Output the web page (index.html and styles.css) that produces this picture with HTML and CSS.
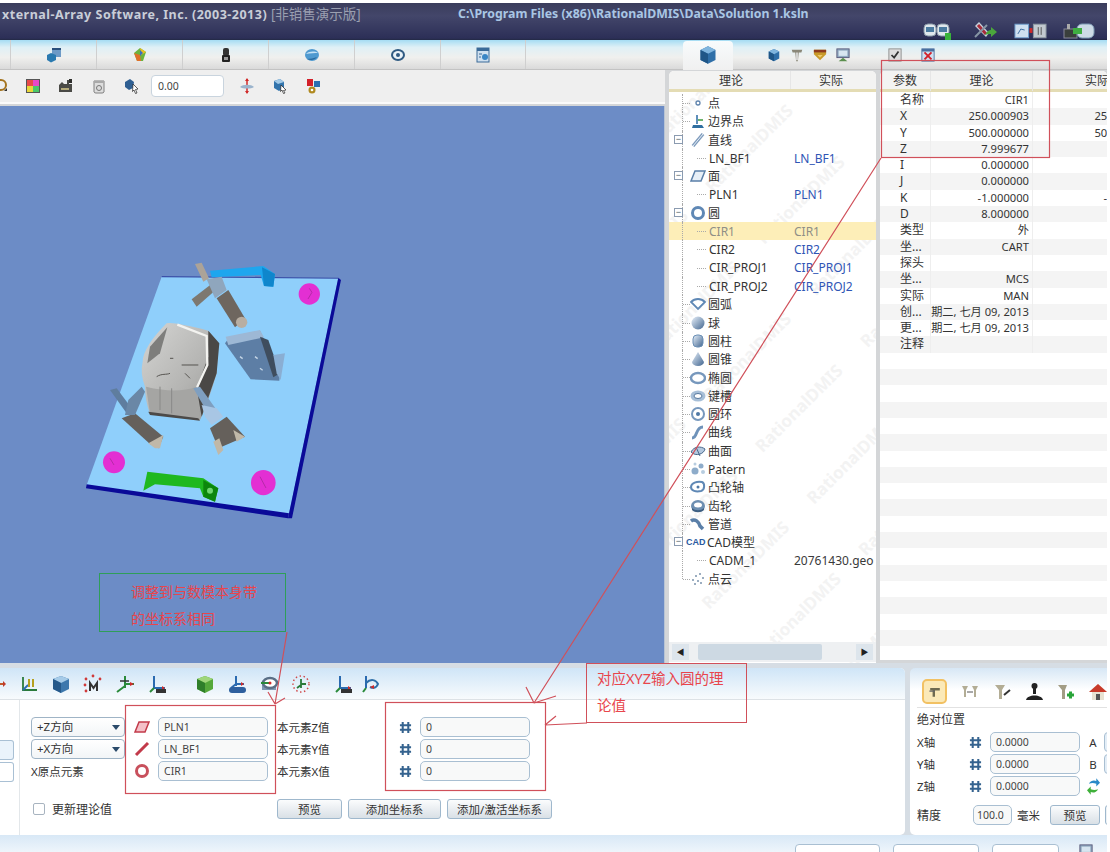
FILE: index.html
```html
<!DOCTYPE html>
<html lang="zh">
<head>
<meta charset="utf-8">
<title>RationalDMIS</title>
<link rel="stylesheet" href="styles.css">
</head>
<body>
<svg class="defs" aria-hidden="true">
  <defs>
    <linearGradient id="gBall" x1="0" y1="0" x2="1" y2="1"><stop offset="0" stop-color="#e8f1fb"/><stop offset="1" stop-color="#41658f"/></linearGradient>
    <linearGradient id="gPart" x1="0" y1="0" x2="1" y2="1"><stop offset="0" stop-color="#d5d5d3"/><stop offset=".6" stop-color="#b4b4b2"/><stop offset="1" stop-color="#979795"/></linearGradient>
    <symbol id="cube" viewBox="0 0 16 16"><path d="M8 1l6 3v8l-6 3-6-3V4z" fill="#2f6fa8"/><path d="M8 1l6 3-6 3-6-3z" fill="#7fb5de"/><path d="M8 7v8l-6-3V4z" fill="#1f5687"/></symbol>
    <symbol id="tabA" viewBox="0 0 16 16"><rect x="6" y="1" width="9" height="9" fill="#6d9ac6"/><rect x="6" y="1" width="9" height="2" fill="#294f7c"/><path d="M5 6l5 2v5l-5 2.500-4-2.500V8z" fill="#2a7ab0"/></symbol>
    <symbol id="tabB" viewBox="0 0 16 16"><path d="M8 1l6 4-3 9H5L2 6z" fill="#6cb33f"/><path d="M8 1l6 4-5 3z" fill="#e8c020"/><path d="M2 6l6 2 1 6H5z" fill="#e0702a"/><path d="M8 3l3 3-3 3z" fill="#3a6fc0"/></symbol>
    <symbol id="tabC" viewBox="0 0 16 16"><rect x="5" y="1" width="6" height="8" rx="2" fill="#333"/><rect x="4" y="8" width="8" height="7" rx="1" fill="#222"/><rect x="6" y="10" width="4" height="3" fill="#999"/></symbol>
    <symbol id="tabD" viewBox="0 0 16 16"><ellipse cx="8" cy="8" rx="7" ry="6" fill="#4f9ad0"/><path d="M2 7c3-3 9-3 12-1-3 0-8 0-12 1z" fill="#c6e2f5"/><path d="M3 12c4 2 8 1 10-2-3 1-7 2-10 2z" fill="#2a6a9e"/></symbol>
    <symbol id="tabE" viewBox="0 0 16 16"><ellipse cx="8" cy="8" rx="7" ry="6" fill="#2f5a82"/><ellipse cx="8" cy="8" rx="5" ry="4" fill="#e9f2f8"/><circle cx="8" cy="8" r="2" fill="#2f5a82"/></symbol>
    <symbol id="tabF" viewBox="0 0 16 16"><rect x="2" y="1" width="12" height="14" fill="#cfe0ef" stroke="#3a6a98"/><rect x="2" y="1" width="12" height="3" fill="#3a6a98"/><circle cx="10" cy="10" r="3" fill="#3a86c5"/><path d="M4 7h3M4 10h2" stroke="#3a6a98"/></symbol>
    <symbol id="cutA" viewBox="0 0 8 16"><circle cx="1" cy="7" r="5" fill="none" stroke="#a5741f" stroke-width="2"/><path d="M4 13h3v-3z" fill="#333"/></symbol>
    <symbol id="pal" viewBox="0 0 16 16"><rect x="1" y="1" width="14" height="14" fill="#555"/><rect x="2" y="2" width="6" height="6" fill="#e84a4a"/><rect x="8" y="2" width="6" height="6" fill="#e848c8"/><rect x="2" y="8" width="6" height="6" fill="#e8d83a"/><rect x="8" y="8" width="6" height="6" fill="#4ac86a"/></symbol>
    <symbol id="paint" viewBox="0 0 16 16"><path d="M1 14V7l3-3 2 2h3V2h2v4h3v8z" fill="#4a4a46"/><path d="M11 1h3v4h-3z" fill="#2f2f2c"/><rect x="3" y="10" width="8" height="2" fill="#b5ab7a"/></symbol>
    <symbol id="can" viewBox="0 0 16 16"><path d="M3 3h10v11a2 2 0 0 1-2 1H5a2 2 0 0 1-2-1z" fill="#ddd" stroke="#808080"/><path d="M3 3h10v2H3z" fill="#a9a9a9"/><circle cx="8" cy="10" r="2.500" fill="none" stroke="#777"/></symbol>
    <symbol id="pick" viewBox="0 0 16 16"><path d="M1 4l5-3 4 3-1 6-4 2-4-3z" fill="#2f5f92"/><path d="M9 6l5 5-2.500.5L13 15l-1.500.5-1.500-3.500-1.500 1.500z" fill="#fff" stroke="#222" stroke-width=".7"/></symbol>
    <symbol id="axis" viewBox="0 0 16 16"><path d="M8 1v14" stroke="#d02a2a" stroke-width="1.500"/><path d="M1 9c3-3 11-3 14 0-3 2-11 2-14 0z" fill="#9bb4cd"/><path d="M8 0l-2 3h4zM8 16l-2-3h4z" fill="#d02a2a"/></symbol>
    <symbol id="pick2" viewBox="0 0 16 16"><path d="M2 3l6-2 4 3v6l-5 3-5-3z" fill="#3274ad"/><path d="M2 3l6-2 4 3-6 2z" fill="#a4cbe8"/><path d="M9 7l5 5-2.500.5L13 15l-1.500.5-1.500-3.500-1.500 1.500z" fill="#fff" stroke="#222" stroke-width=".7"/></symbol>
    <symbol id="gears" viewBox="0 0 16 16"><rect x="2" y="1" width="6" height="7" fill="#d3202a"/><rect x="9" y="3" width="6" height="6" fill="#2a6eb0"/><circle cx="7" cy="12" r="3.500" fill="#b08a20"/><circle cx="7" cy="12" r="1.300" fill="#fff"/></symbol>
    <symbol id="mon" viewBox="0 0 28 18"><rect x="1" y="2" width="12" height="12" rx="4" fill="#dfe7ec" stroke="#8a9aa8"/><rect x="14" y="2" width="12" height="12" rx="4" fill="#dfe7ec" stroke="#8a9aa8"/><rect x="3" y="5" width="8" height="5" fill="#4a7a9f"/><rect x="16" y="5" width="8" height="5" fill="#4a7a9f"/><rect x="22" y="11" width="6" height="7" fill="#39b33a"/></symbol>
    <symbol id="tool" viewBox="0 0 24 18"><path d="M6 0l10 11-3 4L2 4z" fill="#c7d2dc"/><path d="M5 3l8 9" stroke="#a82a3a" stroke-width="3"/><path d="M2 15L14 3" stroke="#8796a5" stroke-width="2"/><path d="M12 13c2-4 4-5 6-5V5l6 5-6 5v-3c-2 0-4 0-6 1z" fill="#4ba63c"/></symbol>
    <symbol id="panelsw" viewBox="0 0 34 16"><rect x="1" y="1" width="14" height="14" fill="#cfe0f0" stroke="#6f9fce"/><path d="M4 11l3-5 4 1" stroke="#3b6ca0" fill="none"/><rect x="16" y="5" width="3" height="5" fill="#d02a2a"/><rect x="20" y="1" width="13" height="14" fill="#c2c9cf" stroke="#8d98a1"/><path d="M25 4v8M28 4v8" stroke="#555"/></symbol>
    <symbol id="run" viewBox="0 0 32 18"><rect x="1" y="7" width="13" height="9" fill="#3a3f3c" stroke="#889"/><path d="M4 7V2h3v5z" fill="#aaa"/><rect x="14" y="2" width="17" height="14" rx="5" fill="#cddbe6" stroke="#7d9ab3"/><path d="M10 6h9v6h-9z" fill="#3fae42"/></symbol>
    <symbol id="probe" viewBox="0 0 16 16"><path d="M2 2h12l-1 3h-3l-1 10H7L6 5H3z" fill="#8a8778"/><path d="M7 5h2v9H7z" fill="#ddd"/></symbol>
    <symbol id="hat" viewBox="0 0 16 16"><path d="M1 2h14v5l-7 7-7-7z" fill="#c89a2a"/><path d="M1 2h14v3H1z" fill="#8d3a1e"/><path d="M5 8h6l-3 3z" fill="#eecb6a"/></symbol>
    <symbol id="scr" viewBox="0 0 16 16"><rect x="1" y="1" width="14" height="10" fill="#8fa8bf" stroke="#557"/><rect x="3" y="3" width="10" height="6" fill="#d7e5f0"/><path d="M3 15l5-4 5 4z" fill="#5b8f4e"/></symbol>
    <symbol id="chk" viewBox="0 0 16 16"><rect x="1" y="1" width="14" height="14" fill="#ddd" stroke="#8a8a8a"/><path d="M4 8l3 3 5-7" fill="none" stroke="#333" stroke-width="2"/></symbol>
    <symbol id="xbox" viewBox="0 0 16 16"><rect x="1" y="1" width="14" height="14" fill="#cfdff0" stroke="#4a6fa0"/><rect x="1" y="1" width="14" height="3" fill="#4a6fa0"/><path d="M4 5l8 8M12 5l-8 8" stroke="#d3202a" stroke-width="2.200"/></symbol>
    <symbol id="tPoint" viewBox="0 0 16 16"><circle cx="8" cy="8" r="2" fill="#fff" stroke="#5e83ad" stroke-width="1.300"/></symbol>
    <symbol id="tBound" viewBox="0 0 16 16"><path d="M7 2v9" stroke="#2a6aa5" stroke-width="1.500"/><path d="M3 12h9l2 3H2z" fill="#2f6fa0"/><path d="M8 7h5" stroke="#3c9a3c" stroke-width="1.500"/></symbol>
    <symbol id="tLine" viewBox="0 0 16 16"><path d="M3 14L13 2" stroke="#7f9cbd" stroke-width="3.500"/><path d="M3 14L13 2" stroke="#e8f0f8" stroke-width="1"/></symbol>
    <symbol id="tPlane" viewBox="0 0 16 16"><path d="M5 3h10l-4 10H1z" fill="#e7eff7" stroke="#5a7fa8" stroke-width="1.500"/></symbol>
    <symbol id="tCircle" viewBox="0 0 16 16"><circle cx="8" cy="8" r="5.500" fill="#fff" stroke="#5f88b5" stroke-width="3"/></symbol>
    <symbol id="tArc" viewBox="0 0 16 16"><path d="M1 6c4-4 10-4 14 0l-7 7z" fill="#fff" stroke="#5f88b5" stroke-width="1.800"/></symbol>
    <symbol id="tBall" viewBox="0 0 16 16"><circle cx="8" cy="8" r="6.500" fill="url(#gBall)"/></symbol>
    <symbol id="tCyl" viewBox="0 0 16 16"><rect x="3" y="2" width="10" height="12" rx="4" fill="url(#gBall)" stroke="#6a8fb5"/></symbol>
    <symbol id="tCone" viewBox="0 0 16 16"><path d="M8 1l6 10a6 4 0 0 1-12 0z" fill="url(#gBall)"/></symbol>
    <symbol id="tEll" viewBox="0 0 16 16"><ellipse cx="8" cy="8" rx="7" ry="5" fill="#fff" stroke="#7798bd" stroke-width="2.400"/></symbol>
    <symbol id="tSlot" viewBox="0 0 16 16"><ellipse cx="8" cy="8" rx="7.500" ry="5.500" fill="#a7bfd8"/><ellipse cx="8" cy="8" rx="4" ry="2.500" fill="#fff" stroke="#55789f"/></symbol>
    <symbol id="tTorus" viewBox="0 0 16 16"><circle cx="8" cy="8" r="6" fill="#fff" stroke="#7798bd" stroke-width="2"/><circle cx="8" cy="8" r="2" fill="#4f78a5"/></symbol>
    <symbol id="tCurve" viewBox="0 0 16 16"><path d="M2 14c6 0 3-11 11-11" fill="none" stroke="#6f93ba" stroke-width="3"/></symbol>
    <symbol id="tSurf" viewBox="0 0 16 16"><path d="M1 9c3-6 10-6 14-3-1 5-9 8-14 3z" fill="#b4c8de" stroke="#48688c"/><path d="M6 4l4 9" stroke="#48688c"/></symbol>
    <symbol id="tPat" viewBox="0 0 16 16"><circle cx="5" cy="10" r="3.500" fill="#8eacca"/><circle cx="11" cy="5" r="2.500" fill="#8eacca"/><circle cx="13" cy="11" r="2" fill="#b8cde0"/><circle cx="5" cy="3" r="1.500" fill="#b8cde0"/></symbol>
    <symbol id="tCam" viewBox="0 0 16 16"><path d="M1 8c0-4 6-6 11-5 3 1 3 8-1 9-5 1-10 0-10-4z" fill="#fff" stroke="#5f88b5" stroke-width="2"/><circle cx="8" cy="8" r="1.500" fill="#4f78a5"/></symbol>
    <symbol id="tGear" viewBox="0 0 16 16"><ellipse cx="8" cy="8" rx="7" ry="6" fill="#6d8fb2"/><ellipse cx="8" cy="7" rx="4" ry="2.500" fill="#fff"/><path d="M2 10c3 3 9 3 12 0v2c-3 3-9 3-12 0z" fill="#3e5f82"/></symbol>
    <symbol id="tPipe" viewBox="0 0 16 16"><path d="M1 5c4-3 8 1 9 5l3 3" fill="none" stroke="#5a7fa8" stroke-width="3.500"/></symbol>
    <symbol id="tCloud" viewBox="0 0 16 16"><g fill="#7b93ad"><circle cx="3" cy="9" r="1"/><circle cx="6" cy="5" r="1"/><circle cx="10" cy="3" r="1"/><circle cx="13" cy="7" r="1"/><circle cx="8" cy="10" r="1"/><circle cx="11" cy="12" r="1"/><circle cx="5" cy="13" r="1"/></g></symbol>
    <symbol id="cutB" viewBox="0 0 6 20"><path d="M0 10h5" stroke="#c05a2a" stroke-width="2"/><path d="M3 7l3 3-3 3z" fill="#c03a2a"/></symbol>
    <symbol id="bA" viewBox="0 0 20 20"><path d="M4 3v13h14" fill="none" stroke="#2a7a3a" stroke-width="1.800"/><path d="M4 16l5-5" stroke="#2a6ab0" stroke-width="1.800"/><path d="M10 5v8M14 5v8" stroke="#b5a020" stroke-width="2"/></symbol>
    <symbol id="bCube" viewBox="0 0 20 20"><path d="M10 2l8 3v10l-8 4-8-4V5z" fill="#3d78ad"/><path d="M10 2l8 3-8 4-8-4z" fill="#a6cbe8"/><path d="M10 9v10l-8-4V5z" fill="#25598a"/></symbol>
    <symbol id="bM" viewBox="0 0 20 20"><g fill="#d03a3a"><circle cx="10" cy="2" r="1.400"/><circle cx="3" cy="5" r="1.400"/><circle cx="17" cy="5" r="1.400"/><circle cx="2" cy="11" r="1.400"/><circle cx="3" cy="17" r="1.400"/></g><path d="M7 17V9l3.500 5L14 9v8" fill="none" stroke="#333" stroke-width="2"/></symbol>
    <symbol id="bB" viewBox="0 0 20 20"><path d="M10 2v12M2 18l8-6M10 10h9" fill="none" stroke="#2a8a3a" stroke-width="2"/><path d="M5 7h9" stroke="#333" stroke-width="1.500"/><path d="M19 10l-4-2v4z" fill="#d02a2a"/></symbol>
    <symbol id="b321" viewBox="0 0 20 20"><path d="M7 2v12h11" fill="none" stroke="#2a6ab0" stroke-width="2"/><path d="M7 14l-4 4" stroke="#2a8a3a" stroke-width="2"/><path d="M18 14l-3-2v4z" fill="#d02a2a"/><rect x="9" y="15" width="10" height="4" fill="#333"/></symbol>
    <symbol id="bGreen" viewBox="0 0 20 20"><path d="M10 2l8 3v10l-8 4-8-4V5z" fill="#55a83a"/><path d="M10 2l8 3-8 4-8-4z" fill="#9fd67a"/><path d="M10 9v10l-8-4V5z" fill="#2f7f2a"/></symbol>
    <symbol id="bCad" viewBox="0 0 20 20"><path d="M9 2v10M9 10h8M9 10l-5 4" fill="none" stroke="#2a6ab0" stroke-width="2"/><path d="M17 10l-3-2v4z" fill="#d02a2a"/><rect x="2" y="13" width="17" height="6" rx="3" fill="#2d5f9e"/></symbol>
    <symbol id="bRing" viewBox="0 0 20 20"><path d="M3 8v8h14V8" fill="#7d97b2"/><ellipse cx="11" cy="9" rx="7" ry="5" fill="#fff" stroke="#5a6f86" stroke-width="2.500"/><path d="M2 9h8" stroke="#2a8a3a" stroke-width="2"/><circle cx="11" cy="9" r="1.500" fill="#d02a2a"/></symbol>
    <symbol id="bDots" viewBox="0 0 20 20"><circle cx="10" cy="10" r="8" fill="none" stroke="#d04a4a" stroke-width="1.500" stroke-dasharray="1.500 2.500"/><path d="M10 5v9M6 14l4-3M10 10h5" stroke="#2a7a3a" stroke-width="1.800" fill="none"/></symbol>
    <symbol id="bMap" viewBox="0 0 20 20"><path d="M7 2v12h11" fill="none" stroke="#2a6ab0" stroke-width="2"/><path d="M7 14l-4 4" stroke="#2a8a3a" stroke-width="2"/><path d="M18 14l-3-2v4z" fill="#d02a2a"/><rect x="8" y="15" width="11" height="4" fill="#333"/></symbol>
    <symbol id="bLast" viewBox="0 0 20 20"><path d="M5 2v12" stroke="#2a6ab0" stroke-width="2"/><path d="M5 14l-3 4" stroke="#2a8a3a" stroke-width="2"/><path d="M5 9c5-5 10-3 12 1-2 5-6 4-8 3" fill="none" stroke="#2f6fa8" stroke-width="2"/><path d="M9 13l4-2v4z" fill="#d02a2a"/></symbol>
    <symbol id="rPlane" viewBox="0 0 16 16"><path d="M5 3h10l-4 10H1z" fill="#f4c0c8" stroke="#c23a4a" stroke-width="1.500"/></symbol>
    <symbol id="rLine" viewBox="0 0 16 16"><path d="M2 14L14 2" stroke="#c23a4a" stroke-width="3"/></symbol>
    <symbol id="rCircle" viewBox="0 0 16 16"><circle cx="8" cy="8" r="5.500" fill="#fff" stroke="#c8505c" stroke-width="3"/></symbol>
    <symbol id="hash" viewBox="0 0 14 14"><path d="M4 1v12M10 1v12M1 4.500h12M1 9.500h12" stroke="#35638f" stroke-width="2.200"/></symbol>
    <symbol id="pA" viewBox="0 0 20 20"><path d="M4 5h12v3H10v8H7V8H4z" fill="#6f6a50"/><path d="M3 9h7" stroke="#666" stroke-width="1.500"/></symbol>
    <symbol id="pB" viewBox="0 0 20 20"><path d="M2 4h6l-2 4v7H4V8zM12 4h6l-2 4v7h-2V8z" fill="#b3ad95"/><path d="M7 10h6" stroke="#555"/></symbol>
    <symbol id="pC" viewBox="0 0 20 20"><path d="M3 3h10l-3 5v9H7V8z" fill="#b3ad95"/><path d="M12 13l6-5" stroke="#333" stroke-width="2"/></symbol>
    <symbol id="pD" viewBox="0 0 20 20"><path d="M9 2h3v10H9z" fill="#222"/><circle cx="10.500" cy="4" r="3" fill="#222"/><path d="M2 18c1-6 16-6 17 0z" fill="#222"/></symbol>
    <symbol id="pE" viewBox="0 0 20 20"><path d="M2 3h9L9 8v9H6V8z" fill="#a39d85"/><path d="M11 13h7M14.500 9.500v7" stroke="#2aa53a" stroke-width="3"/></symbol>
    <symbol id="pHome" viewBox="0 0 20 20"><path d="M10 2l9 8h-3v8H4v-8H1z" fill="#e8e2d2"/><path d="M10 2l9 8H1z" fill="#c83a2a"/><rect x="8" y="12" width="4" height="6" fill="#555"/></symbol>
    <symbol id="swap" viewBox="0 0 14 18"><path d="M2 6c2-4 6-4 8-3V0l4 5-4 4V6C7 5 5 5 2 6z" fill="#2a8ac8"/><path d="M12 12c-2 4-6 4-8 3v3l-4-5 4-4v3c3 1 5 1 8 0z" fill="#3fb03a"/></symbol>
  </defs>
</svg>
<div class="app">
  <div class="top-gap"></div>
  <header class="titlebar">
    <div class="title-line">
      <span class="title-app">xternal-Array Software, Inc. (2003-2013) <span class="dim">[非销售演示版]</span></span>
      <span class="title-path">C:\Program Files (x86)\RationalDMIS\Data\Solution 1.ksln</span>
    </div>
    <div class="title-icons">
      <svg class="ti ti-mon"><use href="#mon"/></svg>
      <svg class="ti ti-tool"><use href="#tool"/></svg>
      <svg class="ti ti-panel"><use href="#panelsw"/></svg>
      <svg class="ti ti-run"><use href="#run"/></svg>
    </div>
  </header>
  <nav class="tabbar">
    <div class="tabs">
      <div class="tab"><svg class="ic16"><use href="#tabA"/></svg></div>
      <div class="tab"><svg class="ic16"><use href="#tabB"/></svg></div>
      <div class="tab"><svg class="ic16"><use href="#tabC"/></svg></div>
      <div class="tab"><svg class="ic16"><use href="#tabD"/></svg></div>
      <div class="tab"><svg class="ic16"><use href="#tabE"/></svg></div>
      <div class="tab"><svg class="ic16"><use href="#tabF"/></svg></div>
    </div>
    <div class="tabs-right">
      <div class="tab-active"><svg class="ic20"><use href="#cube"/></svg></div>
      <svg class="ic14"><use href="#cube"/></svg>
      <svg class="ic14"><use href="#probe"/></svg>
      <svg class="ic14"><use href="#hat"/></svg>
      <svg class="ic14"><use href="#scr"/></svg>
      <svg class="ic14 chk"><use href="#chk"/></svg>
      <svg class="ic14 xbx"><use href="#xbox"/></svg>
    </div>
  </nav>
  <main class="main">
    <section class="work">
      <div class="toolbar">
        <svg class="cut8"><use href="#cutA"/></svg>
        <svg class="ic16"><use href="#pal"/></svg>
        <svg class="ic16"><use href="#paint"/></svg>
        <svg class="ic16"><use href="#can"/></svg>
        <svg class="ic16"><use href="#pick"/></svg>
        <div class="tool-input">0.00</div>
        <svg class="ic16"><use href="#axis"/></svg>
        <svg class="ic16"><use href="#pick2"/></svg>
        <svg class="ic16"><use href="#gears"/></svg>
      </div>
      <div class="viewport">
        <svg class="scene" viewBox="60 240 300 300" preserveAspectRatio="none">
          <g transform="translate(60 240) scale(.3333)">
            <path d="M305 110L835 115 687 822 80 735z" fill="#8fcffb"/>
            <path d="M80 733L687 820 684 835 78 745z" fill="#0a0a98"/>
            <path d="M835 113L843 120 696 835 684 835z" fill="#0a0a98"/>
            <path d="M305 108L835 113 835 116 305 112z" fill="#3a4fa8"/>
            <path d="M450 92L610 78 645 102 640 140 612 138 602 105 455 112z" fill="#1ea6ee"/>
            <path d="M606 82L645 102 640 140 612 138z" fill="#0f86cc"/>
            <circle cx="748" cy="162" r="32" fill="#e32fd3"/>
            <circle cx="162" cy="667" r="33" fill="#e32fd3"/>
            <ellipse cx="610" cy="728" rx="37" ry="38" fill="#e32fd3"/>
            <path d="M748 145l8 12-12 20M150 655l12 20M600 710l18 34" stroke="#b52aa8" stroke-width="3" fill="none"/>
            <path d="M262 695L430 715 475 745 465 785 430 770 420 745 285 733 250 752z" fill="#1fb81f"/>
            <path d="M430 720L475 745 465 785 430 770z" fill="#0c860c"/>
            <circle cx="450" cy="752" r="9" fill="#6fd66f"/>
            <path d="M495 310L510 290 600 272 660 400 658 422 572 418z" fill="#5d7ea5"/>
            <path d="M497 290L600 270 612 292 505 315z" fill="#9db8d5"/>
            <path d="M600 290L625 300 660 400 640 412z" fill="#3f4d5e"/>
            <path d="M640 345L675 340 662 420 650 400z" fill="#8aaed3"/>
            <path d="M540 350l8 6M585 350l8 6M600 385l8 6" stroke="#c5d6e6" stroke-width="4"/>
            <path d="M470 175L505 150 555 235 525 262z" fill="#6e665f"/>
            <path d="M395 178L470 120 490 130 410 200z" fill="#7d7870"/>
            <path d="M405 72L425 68 447 115 430 125z" fill="#aca398"/>
            <path d="M440 118L485 110 500 150 465 175z" fill="#8fa6bd"/>
            <circle cx="545" cy="247" r="17" fill="#b8aea2"/>
            <path d="M320 250Q340 245 445 272L475 310 470 400Q440 500 420 540L270 522Q255 480 255 440 240 400 248 365 250 320 320 250z" fill="url(#gPart)"/>
            <path d="M445 272L478 310 470 400 425 530 410 445 445 350z" fill="#4a4846"/>
            <path d="M352 254L440 288 442 375 410 445" fill="none" stroke="#f3f3f0" stroke-width="7"/>
            <path d="M322 262L270 320 262 370 300 340z" fill="#7e7e7c"/>
            <path d="M258 440C320 455 370 455 410 440L420 540 270 520z" fill="#a5a5a3"/>
            <path d="M265 515L415 535 420 542 270 525z" fill="#4c4a48"/>
            <path d="M300 440v70M335 445v75" stroke="#8a8a88" stroke-width="3"/>
            <path d="M290 410c15-10 30-5 40-10M330 355h10M375 400l15 15M365 375h50" stroke="#55534f" stroke-width="3" fill="none"/>
            <path d="M185 535L225 520 310 590 295 625 270 612z" fill="#65605b"/>
            <path d="M150 450L170 445 215 505 200 520z" fill="#5f7d9e"/>
            <path d="M205 480L245 440 255 455 225 525 195 525z" fill="#6a87a6"/>
            <path d="M265 610L310 585 300 625 285 625z" fill="#c0b8a8"/>
            <path d="M400 445L420 440 470 510 450 530z" fill="#7f9fc0"/>
            <path d="M425 495L470 505 490 530 455 555 435 530z" fill="#a8c6e4"/>
            <path d="M450 565L500 530 555 590 510 610 475 625z" fill="#65605b"/>
            <path d="M460 605L478 595 490 630 475 645zM520 570L555 590 530 605z" fill="#c0b8a8"/>
          </g>
        </svg>
      </div>
    </section>
    <section class="tree">
      <div class="watermark">
        <span>RationalDMIS</span><span>RationalDMIS</span><span>RationalDMIS</span><span>RationalDMIS</span><span>RationalDMIS</span><span>RationalDMIS</span><span>RationalDMIS</span><span>RationalDMIS</span><span>RationalDMIS</span><span>RationalDMIS</span><span>RationalDMIS</span><span>RationalDMIS</span><span>RationalDMIS</span><span>RationalDMIS</span><span>RationalDMIS</span><span>RationalDMIS</span><span>RationalDMIS</span><span>RationalDMIS</span><span>RationalDMIS</span><span>RationalDMIS</span><span>RationalDMIS</span><span>RationalDMIS</span><span>RationalDMIS</span><span>RationalDMIS</span>
      </div>
      <div class="tree-head"><span>理论</span><span>实际</span></div>
      <div class="tree-rows">
        <div class="row"><svg class="ic16"><use href="#tPoint"/></svg><span class="nm">点</span></div>
        <div class="row"><svg class="ic16"><use href="#tBound"/></svg><span class="nm">边界点</span></div>
        <div class="row open"><b class="tog">−</b><svg class="ic16"><use href="#tLine"/></svg><span class="nm">直线</span></div>
        <div class="row sub"><span class="nm">LN_BF1</span><span class="act">LN_BF1</span></div>
        <div class="row open"><b class="tog">−</b><svg class="ic16"><use href="#tPlane"/></svg><span class="nm">面</span></div>
        <div class="row sub"><span class="nm">PLN1</span><span class="act">PLN1</span></div>
        <div class="row open"><b class="tog">−</b><svg class="ic16"><use href="#tCircle"/></svg><span class="nm">圆</span></div>
        <div class="row sub sel"><span class="nm">CIR1</span><span class="act">CIR1</span></div>
        <div class="row sub"><span class="nm">CIR2</span><span class="act">CIR2</span></div>
        <div class="row sub"><span class="nm">CIR_PROJ1</span><span class="act">CIR_PROJ1</span></div>
        <div class="row sub"><span class="nm">CIR_PROJ2</span><span class="act">CIR_PROJ2</span></div>
        <div class="row"><svg class="ic16"><use href="#tArc"/></svg><span class="nm">圆弧</span></div>
        <div class="row"><svg class="ic16"><use href="#tBall"/></svg><span class="nm">球</span></div>
        <div class="row"><svg class="ic16"><use href="#tCyl"/></svg><span class="nm">圆柱</span></div>
        <div class="row"><svg class="ic16"><use href="#tCone"/></svg><span class="nm">圆锥</span></div>
        <div class="row"><svg class="ic16"><use href="#tEll"/></svg><span class="nm">椭圆</span></div>
        <div class="row"><svg class="ic16"><use href="#tSlot"/></svg><span class="nm">键槽</span></div>
        <div class="row"><svg class="ic16"><use href="#tTorus"/></svg><span class="nm">圆环</span></div>
        <div class="row"><svg class="ic16"><use href="#tCurve"/></svg><span class="nm">曲线</span></div>
        <div class="row"><svg class="ic16"><use href="#tSurf"/></svg><span class="nm">曲面</span></div>
        <div class="row"><svg class="ic16"><use href="#tPat"/></svg><span class="nm">Patern</span></div>
        <div class="row"><svg class="ic16"><use href="#tCam"/></svg><span class="nm">凸轮轴</span></div>
        <div class="row"><svg class="ic16"><use href="#tGear"/></svg><span class="nm">齿轮</span></div>
        <div class="row"><svg class="ic16"><use href="#tPipe"/></svg><span class="nm">管道</span></div>
        <div class="row open"><b class="tog">−</b><span class="cad">CAD</span><span class="nm">CAD模型</span></div>
        <div class="row sub"><span class="nm">CADM_1</span><span class="act dark">20761430.geo</span></div>
        <div class="row last"><svg class="ic16"><use href="#tCloud"/></svg><span class="nm">点云</span></div>
      </div>
      <div class="hscroll">
        <span class="sb-btn">◀</span><span class="sb-track"><span class="sb-thumb"></span></span><span class="sb-btn">▶</span>
      </div>
    </section>
    <section class="props">
      <div class="p-head"><span>参数</span><span>理论</span><span>实际</span></div>
      <div class="p-row"><span>名称</span><span>CIR1</span><span></span></div>
      <div class="p-row"><span>X</span><span>250.000903</span><span>250.000000</span></div>
      <div class="p-row"><span>Y</span><span>500.000000</span><span>500.000000</span></div>
      <div class="p-row"><span>Z</span><span>7.999677</span><span></span></div>
      <div class="p-row"><span>I</span><span>0.000000</span><span>0.000000</span></div>
      <div class="p-row"><span>J</span><span>0.000000</span><span>0.000000</span></div>
      <div class="p-row"><span>K</span><span>-1.000000</span><span>-1.000000</span></div>
      <div class="p-row"><span>D</span><span>8.000000</span><span>8.000000</span></div>
      <div class="p-row"><span>类型</span><span>外</span><span></span></div>
      <div class="p-row"><span>坐...</span><span>CART</span><span></span></div>
      <div class="p-row"><span>探头</span><span></span><span></span></div>
      <div class="p-row"><span>坐...</span><span>MCS</span><span></span></div>
      <div class="p-row"><span>实际</span><span>MAN</span><span></span></div>
      <div class="p-row"><span>创...</span><span>星期二, 七月 09, 2013</span><span></span></div>
      <div class="p-row"><span>更...</span><span>星期二, 七月 09, 2013</span><span></span></div>
      <div class="p-row"><span>注释</span><span></span><span></span></div>
      <div class="p-row"></div><div class="p-row"></div><div class="p-row"></div><div class="p-row"></div><div class="p-row"></div>
      <div class="p-row"></div><div class="p-row"></div><div class="p-row"></div><div class="p-row"></div><div class="p-row"></div>
      <div class="p-row"></div><div class="p-row"></div><div class="p-row"></div><div class="p-row"></div><div class="p-row"></div>
      <div class="p-row"></div><div class="p-row"></div><div class="p-row"></div><div class="p-row"></div>
    </section>
  </main>
  <section class="bottom">
    <div class="align">
      <div class="b-tools">
        <svg class="cut6"><use href="#cutB"/></svg>
        <svg class="ic20"><use href="#bA"/></svg>
        <svg class="ic20"><use href="#bCube"/></svg>
        <svg class="ic20"><use href="#bM"/></svg>
        <svg class="ic20"><use href="#bB"/></svg>
        <svg class="ic20"><use href="#b321"/></svg>
        <svg class="ic20 gap-l"><use href="#bGreen"/></svg>
        <svg class="ic20"><use href="#bCad"/></svg>
        <svg class="ic20"><use href="#bRing"/></svg>
        <svg class="ic20"><use href="#bDots"/></svg>
        <svg class="ic20 gap-m"><use href="#bMap"/></svg>
        <svg class="ic20 pull"><use href="#bLast"/></svg>
      </div>
      <div class="b-body">
        <div class="b-stubs"><div class="stub"></div><div class="stub white"></div></div>
        <div class="b-form">
          <div class="f-row">
            <div class="sel-box">+Z方向<i class="caret"></i></div>
            <svg class="ic16"><use href="#rPlane"/></svg>
            <div class="field">PLN1</div>
            <span class="f-label">本元素Z值</span>
            <svg class="ic-hash"><use href="#hash"/></svg>
            <div class="field">0</div>
          </div>
          <div class="f-row">
            <div class="sel-box">+X方向<i class="caret"></i></div>
            <svg class="ic16"><use href="#rLine"/></svg>
            <div class="field">LN_BF1</div>
            <span class="f-label">本元素Y值</span>
            <svg class="ic-hash"><use href="#hash"/></svg>
            <div class="field">0</div>
          </div>
          <div class="f-row">
            <div class="sel-plain">X原点元素</div>
            <svg class="ic16"><use href="#rCircle"/></svg>
            <div class="field">CIR1</div>
            <span class="f-label">本元素X值</span>
            <svg class="ic-hash"><use href="#hash"/></svg>
            <div class="field">0</div>
          </div>
          <div class="f-actions">
            <label class="update"><i class="cbx"></i>更新理论值</label>
            <button class="btn b65">预览</button>
            <button class="btn b93">添加坐标系</button>
            <button class="btn b105">添加/激活坐标系</button>
          </div>
        </div>
      </div>
    </div>
    <div class="move">
      <div class="m-tools">
        <span class="m-active"><svg class="ic16"><use href="#pA"/></svg></span>
        <svg class="ic20"><use href="#pB"/></svg>
        <svg class="ic20"><use href="#pC"/></svg>
        <svg class="ic20"><use href="#pD"/></svg>
        <svg class="ic20"><use href="#pE"/></svg>
        <svg class="ic20"><use href="#pHome"/></svg>
      </div>
      <div class="m-title">绝对位置</div>
      <div class="m-row"><span class="m-lab">X轴</span><svg class="ic-hash"><use href="#hash"/></svg><div class="field m-f">0.0000</div><span class="m-ax">A</span><div class="stub2"></div></div>
      <div class="m-row"><span class="m-lab">Y轴</span><svg class="ic-hash"><use href="#hash"/></svg><div class="field m-f">0.0000</div><span class="m-ax">B</span><div class="stub2"></div></div>
      <div class="m-row"><span class="m-lab">Z轴</span><svg class="ic-hash"><use href="#hash"/></svg><div class="field m-f">0.0000</div><svg class="ic-swap"><use href="#swap"/></svg></div>
      <div class="m-foot"><span class="m-lab2">精度</span><div class="field prec">100.0</div><span class="mm">毫米</span><button class="btn b50">预览</button><div class="stub3"></div></div>
    </div>
  </section>
  <footer class="status">
    <div class="s-box w85"></div><div class="s-box w86"></div><div class="s-box w67"></div><svg class="ic14 s-ic"><use href="#scr"/></svg>
  </footer>
  <svg class="notes" viewBox="0 0 1110 852" aria-hidden="true">
    <g fill="none" stroke="#d0505a" stroke-width="1.200">
      <rect x="881.500" y="60.500" width="168" height="97"/>
      <rect x="125.500" y="705.500" width="150" height="88"/>
      <rect x="385.500" y="702.500" width="160" height="88"/>
      <path d="M881 158L534 703M526 687L534 703M534 703L556 696"/>
      <path d="M287 632L275 704M268 692L275 704M275 704L285 698"/>
      <path d="M587 723L545 725M556 716L545 725"/>
    </g>
  </svg>
  <div class="note note-green">调整到与数模本身带的坐标系相同</div>
  <div class="note note-red">对应XYZ输入圆的理论值</div>
</div>
</body>
</html>
```
FILE: styles.css
```css
* { box-sizing: border-box; }
html, body { margin: 0; padding: 0; background: #fff; }
body { font-family: "Noto Sans", "Noto Sans CJK SC", sans-serif; font-size: 11.500px; color: #333; }
svg { display: block; flex: none; }
.defs { width: 0; height: 0; position: absolute; }
.ic14 { width: 14px; height: 14px; }
.ic16 { width: 16px; height: 16px; }
.ic20 { width: 20px; height: 20px; }
.cut8 { width: 8px; height: 16px; }
.cut6 { width: 6px; height: 20px; }
.ic-hash { width: 13px; height: 13px; }
.ic-swap { width: 13px; height: 17px; margin-left: 7px; }

.app { position: relative; width: 1110px; height: 852px; overflow: hidden; display: flex; flex-direction: column; background: #fff; }
.top-gap { height: 3px; background: #fff; }

.titlebar { height: 37px; margin-right: 3px; background: linear-gradient(#3b3d5c, #43466a 35%, #2c2f57 95%, #222a44); display: flex; flex-direction: column; }
.title-line { display: flex; height: 19px; align-items: center; font-weight: 700; font-size: 12.500px; padding-top: 1px; }
.title-app { width: 458px; padding-left: 2px; color: #c9ced8; white-space: nowrap; letter-spacing: .5px; }
.dim { color: #9a9fb0; font-weight: 400; font-size: 13.500px; letter-spacing: 0; }
.title-path { color: #a9c6e4; white-space: nowrap; font-size: 12.300px; }
.title-icons { display: flex; justify-content: flex-end; align-items: center; padding-right: 12px; height: 18px; }
.ti { height: 18px; }
.ti-mon { width: 28px; margin-right: 22px; }
.ti-tool { width: 24px; margin-right: 17px; }
.ti-panel { width: 33px; margin-right: 16px; }
.ti-run { width: 32px; }

.tabbar { height: 30px; margin-right: 3px; display: flex; background: linear-gradient(#a5dcf3, #dff0f6 25%, #f0f0ee 60%, #dadada); border-bottom: 1px solid #c3c3c3; }
.tabs { width: 668px; padding-left: 10px; display: flex; flex: none; }
.tab { width: 86px; height: 29px; flex: none; display: flex; align-items: center; justify-content: center; border-left: 1px solid #cfcfcf; }
.tab:last-child { border-right: 1px solid #cfcfcf; }
.tabs-right { display: flex; align-items: center; gap: 9px; padding-left: 15px; }
.tab-active { width: 50px; height: 29px; margin-top: 1px; margin-right: 25px; display: flex; align-items: center; justify-content: center; background: linear-gradient(#f8fbfc, #f0f0f0); border-radius: 4px 4px 0 0; }
.chk { margin-left: 29px; }
.xbx { margin-left: 10px; }

.main { height: 593px; margin-right: 3px; display: flex; gap: 4px; background: #d4d6d8; }
.work { width: 665px; flex: none; display: flex; flex-direction: column; }
.toolbar { height: 34px; display: flex; align-items: center; gap: 17px; background: #efefef; border-bottom: 2px solid #fafafa; }
.tool-input { width: 73px; height: 22px; margin-left: -6px; margin-right: -2px; padding-left: 6px; line-height: 20px; background: #fff; border: 1px solid #c9d4de; border-radius: 4px; font-size: 10.500px; color: #444; }
.viewport { flex: 1; min-height: 0; margin-top: 2px; background: #6c8cc6; border-right: 1px solid #b8c4d4; }
.scene { position: absolute; left: 60px; top: 240px; width: 300px; height: 300px; }

.tree { position: relative; width: 207px; flex: none; background: #fff; border-radius: 5px 5px 0 0; display: flex; flex-direction: column; overflow: hidden; margin-top: 1px; }
.tree-head { position: relative; height: 21px; flex: none; display: flex; background: #f3f3f2; border-bottom: 3px solid #e4dcb4; line-height: 20px; font-size: 12px; }
.tree-head span:first-child { width: 122px; padding-left: 50px; border-right: 1px solid #e6e6e6; }
.tree-head span:last-child { width: 85px; padding-left: 28px; }
.tree-rows { position: relative; flex: 1; min-height: 0; padding-top: 2px; font-size: 12px; }
.watermark { position: absolute; left: -110px; top: 40px; width: 430px; height: 520px; display: grid; grid-template-columns: repeat(3, 1fr); align-content: start; gap: 50px 16px; transform: rotate(-45deg); color: #f3f3f3; font-size: 17px; font-weight: 700; white-space: nowrap; }
.row { position: relative; height: 18.300px; display: flex; align-items: center; padding-left: 21px; white-space: nowrap; }
.row::before { content: ""; position: absolute; left: 13px; top: 0; bottom: 0; border-left: 1px dotted #aaa; }
.row::after { content: ""; position: absolute; left: 14px; top: 9px; width: 7px; border-top: 1px dotted #aaa; }
.row.last::before { bottom: 9px; }
.row.open::after { display: none; }
.row .nm { margin-left: 2px; color: #333; }
.tog { position: absolute; left: 5px; top: 4px; width: 9px; height: 9px; z-index: 1; background: #fff; border: 1px solid #8b9bb0; font: 400 9px/6px "Liberation Sans", sans-serif; text-align: center; color: #456; }
.row.sub { padding-left: 40px; }
.row.sub .nm { margin-left: 0; width: 85px; flex: none; }
.row.sub::after { left: 28px; width: 9px; }
.row.sub .act { color: #2f55b5; }
.row.sub .act.dark { color: #3a3a3a; }
.row.sub.sel { background: #fdeeb8; }
.row.sub.sel .nm, .row.sub.sel .act { color: #8f8f86; }
.cad { flex: none; width: 19px; margin-left: -4px; color: #2a5aa0; font: 700 9px "Liberation Sans Narrow", "Liberation Sans", sans-serif; }
.hscroll { position: relative; height: 20px; margin-bottom: 1px; padding: 0 3px; display: flex; gap: 9px; align-items: center; background: #eef0f2; flex: none; }
.sb-btn { width: 17px; height: 16px; flex: none; font-size: 8px; line-height: 16px; text-align: center; color: #222; background: #dde5ec; }
.sb-track { flex: 1; height: 16px; }
.sb-thumb { display: block; width: 124px; height: 16px; background: #cdd9e3; border-radius: 2px; }

.props { width: 227px; flex: none; background: #fff; border-radius: 5px 5px 0 0; overflow: hidden; margin-top: 1px; margin-bottom: 3px; font-size: 11.200px; }
.p-head, .p-row { display: grid; grid-template-columns: 51px 102px 126px; width: 279px; }
.p-head { height: 21px; background: #f3f3f2; border-bottom: 3px solid #e4dcb4; line-height: 20px; font-size: 12px; }
.p-head span { text-align: center; border-right: 1px solid #e6e6e6; }
.p-head span:last-child { text-align: left; padding-left: 52px; }
.p-row { height: 16.300px; line-height: 16.300px; }
.p-row:nth-child(odd) { background: #f4f4f4; }
.p-row span { display: flex; justify-content: flex-end; padding: 0 3px; border-right: 1px solid #eee; white-space: nowrap; overflow: hidden; height: 100%; }
.p-row span:first-child { justify-content: flex-start; padding-left: 20px; font-size: 12px; }

.bottom { height: 172px; display: flex; gap: 5px; margin-right: 3px; padding-top: 5px; background: #d6dde4; }
.align { width: 905px; flex: none; display: flex; flex-direction: column; background: #fff; border-radius: 0 5px 5px 0; overflow: hidden; }
.b-tools { height: 32px; flex: none; display: flex; align-items: center; gap: 12px; padding-left: 0; background: linear-gradient(#cfe5f7, #f8fbfd); border-bottom: 1px solid #dde2e6; }
.cut6 { margin-right: 1px; }
.gap-l { margin-left: 16px; }
.gap-m { margin-left: 10px; }
.pull { margin-left: -4px; }
.b-body { flex: 1; display: flex; }
.b-stubs { width: 20px; flex: none; border-right: 1px solid #e3e7ea; padding-top: 40px; display: flex; flex-direction: column; gap: 2px; }
.stub { width: 14px; height: 20px; background: #eaf3fb; border: 1px solid #a9c0d4; border-left: 0; border-radius: 0 3px 3px 0; }
.stub.white { background: #fff; }
.b-form { padding: 17px 0 0 11px; display: flex; flex-direction: column; gap: 2px; }
.f-row { display: flex; align-items: center; height: 20px; }
.sel-box { position: relative; flex: none; width: 94px; height: 20px; padding-left: 5px; line-height: 18px; border: 1px solid #9fb4c6; border-radius: 4px; background: linear-gradient(#fff, #f2f5f7); }
.sel-plain { flex: none; width: 94px; }
.caret { position: absolute; right: 4px; top: 7px; border: 4px solid transparent; border-top: 5px solid #2a4a6a; border-bottom: 0; }
.f-row > .ic16 { margin: 0 8px 0 9px; }
.field { flex: none; width: 110px; height: 20px; padding-left: 5px; line-height: 18px; font-size: 10.500px; background: #f8f9f9; border: 1px solid #a9bfd2; border-radius: 5px; color: #444; }
.f-label { flex: none; width: 131px; padding-left: 9px; }
.f-row .ic-hash { margin-right: 8px; margin-left: 0; }
.f-actions { margin-top: 16px; display: flex; align-items: center; }
.update { flex: none; width: 246px; display: flex; align-items: center; gap: 7px; font-size: 12px; padding-left: 2px; }
.cbx { width: 12px; height: 12px; background: #fff; border: 1px solid #a8b4c0; border-radius: 2px; }
.btn { flex: none; height: 20px; margin-right: 6px; padding: 0; font: inherit; color: #333; background: linear-gradient(#fbfcfd, #d9e0e6); border: 1px solid #9fb8cd; border-radius: 3px; }
.b65 { width: 65px; }
.b93 { width: 93px; }
.b105 { width: 105px; }
.b50 { width: 50px; margin: 0 5px 0 0; }

.move { flex: 1; position: relative; min-width: 0; background: #fff; border-radius: 5px 0 0 5px; padding: 8px 0 0 7px; overflow: hidden; background-image: linear-gradient(#d7e7f5, #fff 22px); }
.m-tools { height: 32px; display: flex; align-items: center; gap: 12px; padding-left: 5px; border-bottom: 1px solid #e2e2e2; }
.m-active { width: 25px; height: 25px; flex: none; display: flex; align-items: center; justify-content: center; background: #fbe9b8; border: 2px solid #f2c163; border-radius: 5px; margin-right: 1px; }
.m-title { height: 24px; line-height: 24px; font-size: 12px; }
.m-row { display: flex; align-items: center; height: 20px; margin-bottom: 2px; white-space: nowrap; }
.m-lab { flex: none; width: 52px; }
.m-row .ic-hash { margin-right: 8px; }
.m-f { width: 90px; }
.m-ax { flex: none; width: 22px; text-align: center; margin-left: 2px; }
.stub2 { flex: none; width: 10px; height: 20px; background: #e4eef7; border: 1px solid #a9bfd2; border-radius: 4px 0 0 4px; }
.m-foot { display: flex; align-items: center; height: 20px; margin-top: 9px; white-space: nowrap; }
.m-lab2 { flex: none; width: 56px; font-size: 12px; }
.prec { width: 39px; padding-left: 3px; }
.mm { flex: none; margin: 0 10px 0 5px; }
.stub3 { flex: none; width: 6px; height: 20px; border: 1px solid #9fb8cd; border-radius: 3px 0 0 3px; background: #eef2f5; }

.status { flex: 1; min-height: 0; margin-right: 3px; display: flex; align-items: flex-start; padding: 9px 0 0 795px; gap: 13px; background: linear-gradient(#d8e8f6, #eef5fb); }
.s-box { height: 20px; background: #fff; border: 1px solid #a9bfd2; border-radius: 4px; }
.w85 { width: 85px; }
.w86 { width: 86px; }
.w67 { width: 67px; }
.s-ic { margin-left: 7px; }

.notes { position: absolute; left: 0; top: 0; width: 1110px; height: 852px; pointer-events: none; }
.note { position: absolute; color: #e8454c; line-height: 27px; }
.note-green { left: 99px; top: 573px; width: 187px; height: 59px; padding: 4px 16px 0 31px; border: 1px solid #2f9e58; font-size: 14px; }
.note-red { left: 586px; top: 663px; width: 161px; height: 60px; padding: 1px 14px 0 10px; border: 1px solid #d0505a; font-size: 14.500px; }
```
